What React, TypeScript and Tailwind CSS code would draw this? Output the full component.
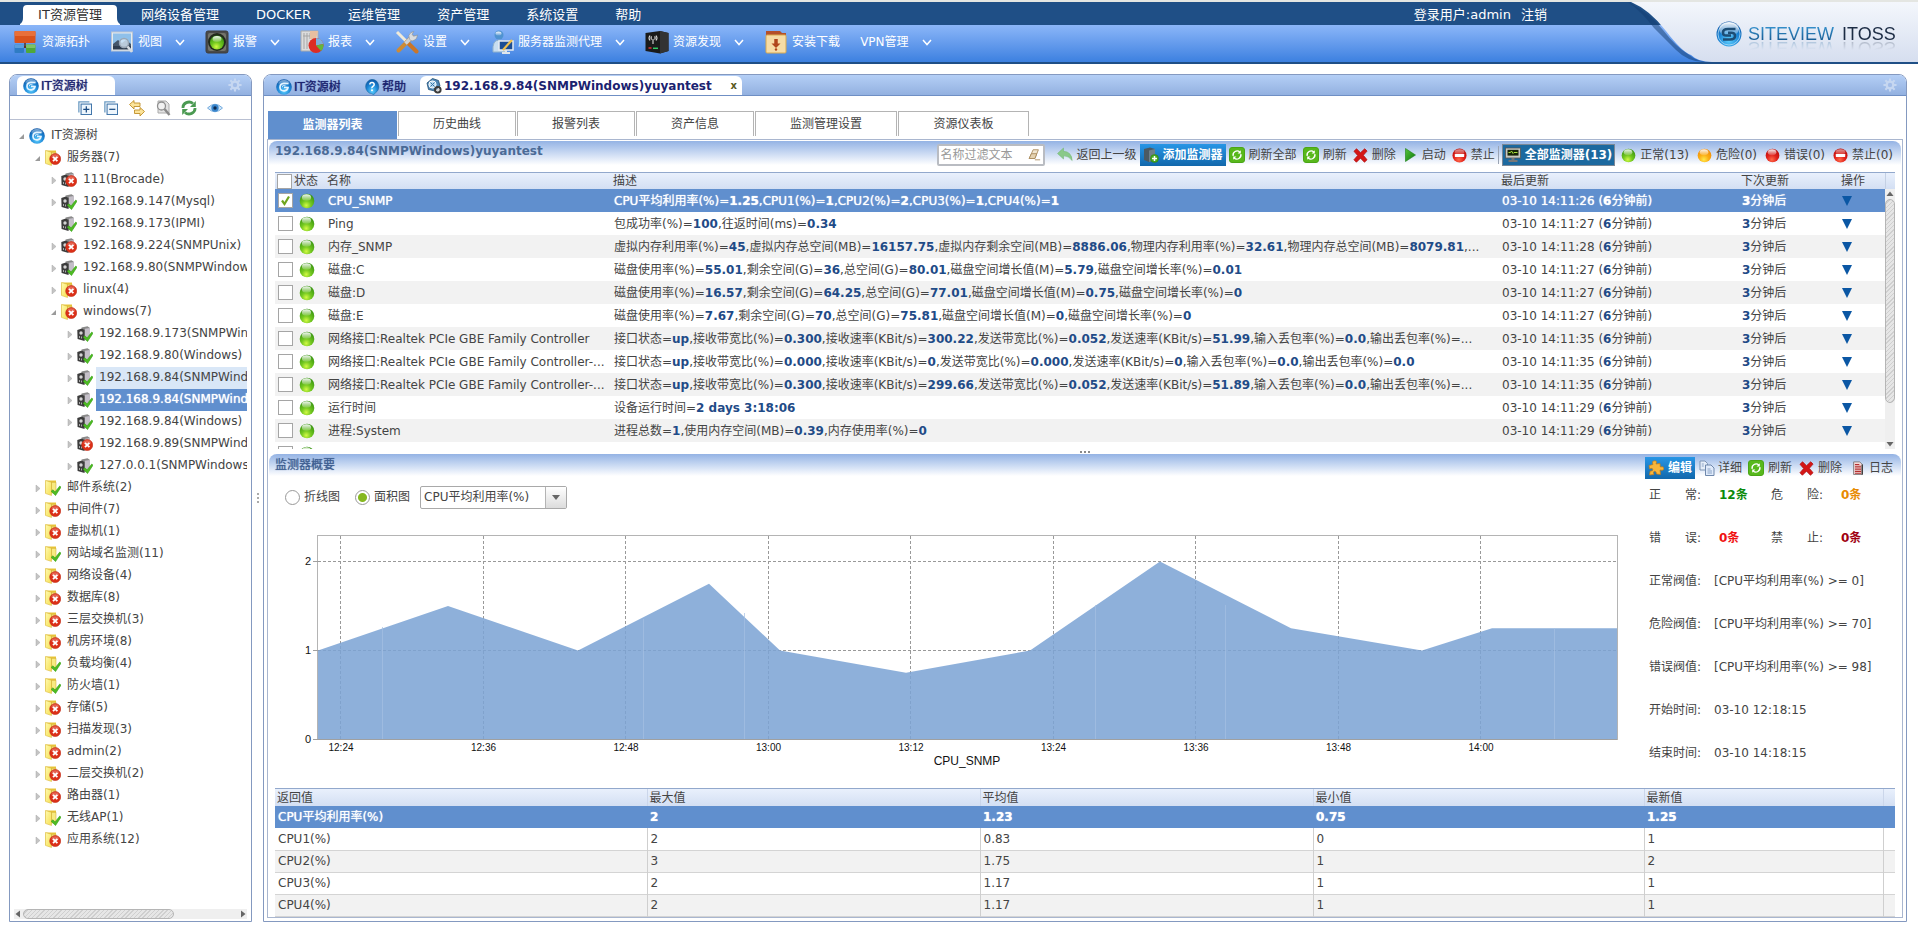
import React, { useState } from "react";

type IconProps = { size?: number };

function Defs() {
  return (
    <svg width="0" height="0" className="absolute" aria-hidden="true">
      <defs>
        <radialGradient id="gGreen" cx="45%" cy="80%" r="80%">
          <stop offset="0" stopColor="#d2fa44" />
          <stop offset="0.4" stopColor="#74c820" />
          <stop offset="1" stopColor="#33900f" />
        </radialGradient>
        <radialGradient id="gOrange" cx="45%" cy="80%" r="75%">
          <stop offset="0" stopColor="#ffe84a" />
          <stop offset="0.5" stopColor="#fbab12" />
          <stop offset="1" stopColor="#f08c08" />
        </radialGradient>
        <radialGradient id="gRed" cx="45%" cy="80%" r="75%">
          <stop offset="0" stopColor="#ff6a4a" />
          <stop offset="0.5" stopColor="#e0201a" />
          <stop offset="1" stopColor="#b80c0a" />
        </radialGradient>
        <linearGradient id="gGloss" x1="0" y1="0" x2="0" y2="1">
          <stop offset="0" stopColor="#fff" stopOpacity="0.95" />
          <stop offset="1" stopColor="#fff" stopOpacity="0.15" />
        </linearGradient>
        <radialGradient id="gBlue" cx="50%" cy="75%" r="80%">
          <stop offset="0" stopColor="#5fd0ff" />
          <stop offset="0.5" stopColor="#1c86d6" />
          <stop offset="1" stopColor="#0a4c9c" />
        </radialGradient>
        <linearGradient id="gFolder" x1="0" y1="0" x2="1" y2="1">
          <stop offset="0" stopColor="#fffbb0" />
          <stop offset="1" stopColor="#f6de50" />
        </linearGradient>
        <linearGradient id="gHeader" x1="0" y1="0" x2="0" y2="1">
          <stop offset="0" stopColor="#f4f7fc" />
          <stop offset="1" stopColor="#d6deef" />
        </linearGradient>
        <linearGradient id="gPlay" x1="0" y1="0" x2="1" y2="1">
          <stop offset="0" stopColor="#58c33c" />
          <stop offset="1" stopColor="#0b7a0b" />
        </linearGradient>
      </defs>
    </svg>
  );
}

function Svg({ size = 16, box = 16, children }: { size?: number; box?: number; children: React.ReactNode }) {
  return (
    <svg width={size} height={size} viewBox={`0 0 ${box} ${box}`} className="shrink-0" aria-hidden="true">
      {children}
    </svg>
  );
}

function SwirlIcon({ size = 16 }: IconProps) {
  return (
    <Svg size={size}>
      <circle cx="8" cy="8" r="7.8" fill="url(#gBlue)" />
      <ellipse cx="8" cy="4" rx="5.6" ry="3" fill="url(#gGloss)" opacity="0.5" />
      <path d="M12.500 4.500 8 4.300Q3.800 4.800 4 8.500T8.500 11.800Q11.500 11.500 12 8.500L8 8.300" fill="none" stroke="#e4f4ff" strokeWidth="1.700" />
      <path d="M9.500 6.300Q6.500 6 6.300 8.200" fill="none" stroke="#bfe2fa" strokeWidth="1.100" />
    </Svg>
  );
}

function LogoIcon() {
  return (
    <Svg size={26} box={26}>
      <circle cx="13" cy="13" r="12.500" fill="url(#gBlue)" />
      <circle cx="13" cy="13" r="11" fill="none" stroke="#bfe4f8" strokeWidth="1" opacity="0.7" />
      <ellipse cx="13" cy="8" rx="10" ry="7" fill="url(#gGloss)" />
      <path d="M19.500 8H12Q7 8 7 11.500T11 14.500H15" fill="none" stroke="#1d4d75" strokeWidth="2.600" />
      <path d="M7 18.500H14Q19 18.500 19 15T15 11.700H12" fill="none" stroke="#1d4d75" strokeWidth="2.600" />
    </Svg>
  );
}

function HelpIcon() {
  return (
    <Svg>
      <path d="M8 0.300a7.300 7.300 0 0 1 3.500 13.400L9.500 15.900 8 14.800A7.300 7.300 0 0 1 8 0.300Z" fill="url(#gBlue)" stroke="#1d6a9c" strokeWidth="0.500" />
      <path d="M5.800 5.500Q6 3.500 8 3.500T10.200 5.500Q10.200 6.600 8.900 7.400T8 9.300" fill="none" stroke="#fff" strokeWidth="1.500" />
      <circle cx="8" cy="11.300" r="1" fill="#fff" />
    </Svg>
  );
}

function HostIcon() {
  return (
    <Svg>
      <path d="M1 5 6.500 0.500 12.500 2.500 14 8 9 13 2.500 11.500Z" fill="#4d86b4" stroke="#1f4c74" strokeWidth="0.800" />
      <circle cx="6.500" cy="6.500" r="3.600" fill="#bcdcf2" stroke="#fff" strokeWidth="1" />
      <path d="M4.500 4.500l4 4M8.500 4.500l-4 4" stroke="#3573a6" strokeWidth="1" />
      <circle cx="11.800" cy="11.800" r="2.800" fill="none" stroke="#3c3c3c" strokeWidth="2" />
      <circle cx="11.800" cy="11.800" r="1.400" fill="#d7d7d7" />
    </Svg>
  );
}

function GearIcon() {
  return (
    <Svg size={14}>
      <g stroke="#c6d7f1" strokeWidth="2.400">
        <path d="M8 0.500v15M0.500 8h15M2.700 2.700l10.600 10.600M13.300 2.700L2.700 13.300" />
      </g>
      <circle cx="8" cy="8" r="3.800" fill="#a4bee8" stroke="#c6d7f1" strokeWidth="2.600" />
    </Svg>
  );
}

function Ball({ tone, size = 15 }: { tone: "green" | "orange" | "red"; size?: number }) {
  const fill = { green: "url(#gGreen)", orange: "url(#gOrange)", red: "url(#gRed)" }[tone];
  return (
    <Svg size={size}>
      <circle cx="8" cy="8" r="7.300" fill={fill} />
      <ellipse cx="7.500" cy="4.500" rx="4.600" ry="3.200" fill="url(#gGloss)" />
    </Svg>
  );
}

function StopIcon() {
  return (
    <Svg size={15}>
      <circle cx="8" cy="8" r="7.500" fill="url(#gRed)" />
      <ellipse cx="8" cy="4.200" rx="5.200" ry="3" fill="url(#gGloss)" opacity="0.6" />
      <rect x="3" y="6.500" width="10" height="3" rx="0.500" fill="#fff" />
    </Svg>
  );
}

function StatusBadge({ ok }: { ok: boolean }) {
  return ok ? (
    <path d="M6.200 11.200 8 9.800 10 12 14.800 6 16 7.200 10.500 15.600Z" fill="#4dbb22" stroke="#38a015" strokeWidth="0.600" />
  ) : (
    <g>
      <circle cx="10.200" cy="9" r="5.500" fill="#dc3018" stroke="#c02a14" strokeWidth="0.600" />
      <ellipse cx="10.200" cy="6.500" rx="3.600" ry="2.200" fill="#fff" opacity="0.250" />
      <path d="M8 6.800l4.400 4.400M12.400 6.800l-4.400 4.400" stroke="#fff" strokeWidth="1.800" />
    </g>
  );
}

function FolderIcon({ ok }: { ok: boolean }) {
  return (
    <Svg>
      <path d="M0.500 0.500H11V13H0.500Z" fill="#e9c63a" />
      <path d="M0.500 0.500 6.500 2.300V15.500L0.500 13.500Z" fill="url(#gFolder)" stroke="#d6b234" strokeWidth="0.500" />
      <path d="M6.500 2.300H11V13H6.500Z" fill="#f8ea80" stroke="#c9a52a" strokeWidth="0.500" />
      <StatusBadge ok={ok} />
    </Svg>
  );
}

function ServerIcon({ ok }: { ok: boolean }) {
  return (
    <Svg>
      <path d="M4.500 1.500 10.500 0.300 13 2V12L7.500 14.500Z" fill="#8a8a8a" />
      <path d="M8 2.800 13 2V12L8 14Z" fill="#c4bfc8" />
      <path d="M0.300 4 4.800 2.500 7.500 4V15L0.600 13Z" fill="#3c3c3c" />
      <circle cx="4" cy="7" r="1.700" fill="#d4d4d4" />
      <path d="M2.500 10v2M4.500 10.500v2" stroke="#c8c8c8" strokeWidth="0.800" />
      <StatusBadge ok={ok} />
    </Svg>
  );
}

function RefreshBox() {
  return (
    <Svg>
      <rect x="0.500" y="0.500" width="15" height="15" rx="2.500" fill="#58b81c" stroke="#4aa516" />
      <path d="M4.200 8.800A4 4 0 0 1 10.800 5M11.800 7.200A4 4 0 0 1 5.200 11" fill="none" stroke="#fff" strokeWidth="1.400" />
      <path d="M11.800 3.200v3.200H8.600ZM4.200 12.800V9.600h3.200Z" fill="#fff" />
    </Svg>
  );
}

function DeleteIcon() {
  return (
    <Svg size={15}>
      <path d="M1 3.500 3.800 0.800 8 5 12.500 0.800 15 3.300 11 7.800 15 12.500 12.200 15.200 8 10.800 3.600 15.200 1 12.500 5 8Z" fill="#d41616" stroke="#b01010" strokeWidth="0.800" />
    </Svg>
  );
}

function BackIcon() {
  return (
    <Svg>
      <path d="M0.500 6.500 6.500 1V4.300Q14.500 4.500 15.200 13.500 11.500 8.600 6.500 8.800V12Z" fill="#8ac98a" stroke="#6cb46c" strokeWidth="0.500" />
    </Svg>
  );
}

function AddMonitorIcon() {
  return (
    <Svg>
      <path d="M1 2 7 0.500 12 2V13L6 15 1 13Z" fill="#4b5a63" />
      <path d="M6 3.500 12 2V13L6 15Z" fill="#6d7f8a" />
      <circle cx="11.500" cy="11.500" r="4" fill="#46a81e" stroke="#2d7c0d" strokeWidth="0.500" />
      <path d="M11.500 9v5M9 11.500h5" stroke="#fff" strokeWidth="1.500" />
    </Svg>
  );
}

function PlayIcon() {
  return (
    <svg width="11" height="14" viewBox="0 0 11 14" className="shrink-0" aria-hidden="true">
      <path d="M0.500 0.500 10.500 7 0.500 13.500Z" fill="url(#gPlay)" stroke="#1a7d14" strokeWidth="0.600" />
    </svg>
  );
}

function MonitorIcon() {
  return (
    <Svg>
      <rect x="0.500" y="1" width="15" height="10" fill="#c9c9c0" stroke="#555" strokeWidth="0.800" />
      <rect x="2.500" y="2.800" width="11" height="5.800" fill="#162406" />
      <path d="M3.500 5.500h2l1-1.500 1.500 2.500 1-1h3.500" stroke="#a8e03c" strokeWidth="1" fill="none" />
      <path d="M6.500 11h3v2h3v2h-9v-2h3Z" fill="#777" />
    </Svg>
  );
}

function EraserIcon() {
  return (
    <Svg size={14}>
      <path d="M7 2h6L9 12H2.500Z" fill="#f1e6d0" stroke="#a8895a" />
      <path d="M5 6.500h6.200L9 12H2.500Z" fill="#e4d2b0" stroke="#a8895a" />
      <path d="M9 13.500h6" stroke="#a8895a" />
    </Svg>
  );
}

function PuzzleIcon() {
  return (
    <Svg>
      <path d="M1 5.500 5 4.500Q3.500 1 6.500 0.800T8 4L12 3.500 12.300 7Q15.800 5.800 15.800 8.500T12 10L12.500 14.500 8.500 14Q8.500 11 6.500 11.300T6 14.500L1.500 15 2.200 11Q5 11.500 4.800 9.500T1.600 8.800Z" fill="#f8b63c" stroke="#c97a10" strokeWidth="0.700" />
    </Svg>
  );
}

function CopyIcon() {
  return (
    <Svg>
      <path d="M1 1h5l2.500 2.500V10H1Z" fill="#e4edf8" stroke="#7d94b4" />
      <path d="M6.500 5H12l3 3v7.500H6.500Z" fill="#dfeafa" stroke="#6f88ac" />
      <path d="M8.500 9h3M8.500 11h4.500M8.500 13h4.500M2.800 4h2M2.800 6h2" stroke="#8aa3c6" />
    </Svg>
  );
}

function LogIcon() {
  return (
    <Svg size={14}>
      <path d="M3 1h7l3 3v11.500H3Z" fill="#f5dada" stroke="#777" />
      <path d="M4.500 4h5M4.500 6h7M4.500 8h7M4.500 10h7M4.500 12h7M4.500 14h7" stroke="#b02828" strokeWidth="1.100" />
      <path d="M12.800 4v11.500" stroke="#333" strokeWidth="1.500" />
    </Svg>
  );
}

function TopologyIcon() {
  return (
    <Svg size={24} box={24}>
      <rect x="0.500" y="1" width="21" height="12" rx="1" fill="#d9531c" />
      <rect x="0.500" y="1" width="21" height="5" rx="1" fill="#e8703a" />
      <path d="M11 13v5M5 17h12" stroke="#5a3020" strokeWidth="1.500" />
      <rect x="0.500" y="14.500" width="9.500" height="8.500" rx="1" fill="#2f7cc4" />
      <rect x="0.500" y="14.500" width="9.500" height="3.500" rx="1" fill="#5a9edb" />
      <rect x="12" y="14.500" width="9.500" height="8.500" rx="1" fill="#4fa83a" />
      <rect x="12" y="14.500" width="9.500" height="3.500" rx="1" fill="#7cc268" />
    </Svg>
  );
}

function ViewIcon() {
  return (
    <Svg size={24} box={24}>
      <rect x="1.500" y="2" width="21" height="19" fill="#e6ebf0" stroke="#b9c5d2" />
      <rect x="3" y="3.500" width="18" height="12" fill="#8fc0ea" />
      <path d="M3 18V14l5-4 4 3 4-3 5 4v4Z" fill="#45566a" />
      <path d="M3 16h18v3.500H3Z" fill="#2e3d50" />
      <circle cx="14" cy="13" r="4.500" fill="#d7e9f7" fillOpacity="0.800" stroke="#9aa7b6" strokeWidth="1.400" />
      <path d="M17.500 16.500 22 22" stroke="#d5dbe2" strokeWidth="2.600" />
    </Svg>
  );
}

function AlarmIcon() {
  return (
    <Svg size={24} box={24}>
      <rect x="1" y="1" width="22" height="22" rx="2" fill="#4a4a4a" stroke="#3c3c3c" />
      <rect x="3" y="3" width="18" height="18" rx="2" fill="#74746c" />
      <circle cx="12" cy="12" r="9" fill="#222a1c" />
      <circle cx="12" cy="12.500" r="7" fill="url(#gGreen)" />
      <ellipse cx="12" cy="9" rx="4.500" ry="3" fill="url(#gGloss)" />
    </Svg>
  );
}

function ReportIcon() {
  return (
    <Svg size={24} box={24}>
      <path d="M1 1h17v20H1Z" fill="#dcdcdc" stroke="#aaa" />
      <path d="M4 3v16M7 3v16M10 3v6M3 6h12" stroke="#a5a5a5" />
      <path d="M10 1h8l-2 8h-6Z" fill="#e8bfa0" />
      <circle cx="16" cy="15.500" r="7.500" fill="#dc2d25" />
      <path d="M16 15.500V8a7.500 7.500 0 0 1 7.300 6Z" fill="#7daedd" />
      <path d="M16 15.500 23.300 14a7.500 7.500 0 0 1-2.300 7Z" fill="#63b63c" />
    </Svg>
  );
}

function ToolsIcon() {
  return (
    <Svg size={24} box={24}>
      <path d="M2 2 12 12" stroke="#f0ead8" strokeWidth="3" />
      <path d="M12 12 21.500 21.500" stroke="#c9762a" strokeWidth="4" strokeLinecap="round" />
      <path d="M17 7 3.500 20.500" stroke="#ce8b35" strokeWidth="4" strokeLinecap="round" />
      <path d="M10.500 13.500 17 7" stroke="#cfd2d6" strokeWidth="3.500" />
      <path d="M16 2.500Q12.500 5 14.500 9T21.500 8.500L22.500 5 18.800 6.200 17 4.500 18.800 1.500Z" fill="#d9dcdf" stroke="#8d8d8d" strokeWidth="0.600" />
    </Svg>
  );
}

function AgentIcon() {
  return (
    <Svg size={24} box={24}>
      <circle cx="9" cy="5" r="4.500" fill="#4f93d0" />
      <ellipse cx="8.500" cy="3.500" rx="3" ry="2" fill="url(#gGloss)" />
      <path d="M3 22Q2 10 9 10T16 22Z" fill="#c8ddf0" stroke="#8fb0cc" />
      <rect x="9" y="11" width="14" height="9" fill="#1c4e93" stroke="#e6ecf2" strokeWidth="1.500" />
      <path d="M12 23h8M16 20v3" stroke="#dfe6ec" strokeWidth="2" />
      <path d="M13 20 22 10" stroke="#f1c04b" strokeWidth="2.200" />
    </Svg>
  );
}

function DiscoverIcon() {
  return (
    <Svg size={24} box={24}>
      <path d="M0.500 3 15 1 23.500 3V21L15 23.500 0.500 21Z" fill="#1a1a1a" />
      <path d="M15 1 23.500 3V21L15 23.500Z" fill="#333" />
      <g fill="none" stroke="#d7d7d7" strokeWidth="1.100">
        <path d="M5 10.500a4 4 0 0 1 0-5M11 5.500a4 4 0 0 1 0 5M6.700 9.500a2 2 0 0 1 0-3M9.500 6.500a2 2 0 0 1 0 3M8 9v5" />
      </g>
      <path d="M3.500 18h3" stroke="#d33" strokeWidth="1.500" />
      <path d="M8 18.300h5" stroke="#3c6" strokeWidth="1.500" />
    </Svg>
  );
}

function DownloadIcon() {
  return (
    <Svg size={24} box={24}>
      <path d="M2 1h14l2 2h4v4H2Z" fill="#b4502a" />
      <rect x="2" y="5" width="20" height="18" rx="1" fill="#f6dca6" stroke="#d9a94f" />
      <path d="M12 9v5" stroke="#b0461c" strokeWidth="3.500" />
      <path d="M7.500 13.500h9L12 18Z" fill="#b0461c" />
      <circle cx="12" cy="19.500" r="1.200" fill="#b0461c" />
    </Svg>
  );
}

function Chevron() {
  return (
    <svg width="10" height="7" viewBox="0 0 10 7" className="ml-[13px] shrink-0" aria-hidden="true">
      <path d="M1 1 5 5.500 9 1" fill="none" stroke="#fff" strokeWidth="1.500" />
    </svg>
  );
}

const NAV = ["网络设备管理", "DOCKER", "运维管理", "资产管理", "系统设置", "帮助"];

const TOOLS: { label: string; icon?: React.ReactNode; menu?: boolean }[] = [
  { label: "资源拓扑", icon: <TopologyIcon /> },
  { label: "视图", icon: <ViewIcon />, menu: true },
  { label: "报警", icon: <AlarmIcon />, menu: true },
  { label: "报表", icon: <ReportIcon />, menu: true },
  { label: "设置", icon: <ToolsIcon />, menu: true },
  { label: "服务器监测代理", icon: <AgentIcon />, menu: true },
  { label: "资源发现", icon: <DiscoverIcon />, menu: true },
  { label: "安装下载", icon: <DownloadIcon /> },
  { label: "VPN管理", menu: true },
];

function Header() {
  return (
    <header className="relative border-t-2 border-[#e4e6e2] text-white">
      <nav className="flex h-[23px] items-end bg-[#1f4f86] text-[13px] leading-5">
        <a href="#it" className="relative ml-5 flex h-5 w-[100px] items-center justify-center text-[#333]">
          <svg className="absolute inset-0 h-full w-full" viewBox="0 0 100 20" preserveAspectRatio="none" aria-hidden="true">
            <path d="M0 19Q3 17 3 13V4Q3 0 7 0H93Q97 0 97 4V13Q97 17 100 19V20H0Z" fill="#fff" />
          </svg>
          <span className="relative">IT资源管理</span>
        </a>
        <div className="ml-[21px] flex flex-1 gap-[37px]">
          {NAV.map((n) => (
            <a key={n} href="#nav">{n}</a>
          ))}
        </div>
        <div className="mr-[371px] flex gap-[10px]">
          <span>登录用户:admin</span>
          <a href="#logout">注销</a>
        </div>
      </nav>
      <div className="flex h-[39px] items-center gap-5 border-b-2 border-[#1f4f86] bg-linear-to-b from-[#8bb6f8] to-[#3c80e0] pl-[14px] text-[12px]">
        {TOOLS.map((t) => (
          <button key={t.label} type="button" className="flex items-center pb-[3px]">
            {t.icon && <span className="mr-1">{t.icon}</span>}
            {t.label}
            {t.menu && <Chevron />}
          </button>
        ))}
      </div>
      <div className="absolute top-0 right-0 h-[60px] w-[290px]">
        <svg className="absolute inset-0" width="290" height="60" viewBox="0 0 290 60" aria-hidden="true">
          <path d="M0 0Q22 11 35 28T60 52Q69 60 82 60H76Q60 60 48 48T26 26Q14 10 0 0Z" fill="#123c70" opacity="0.500" />
          <path d="M3 0Q22 8 38 29T63 53Q70 60 84 60H290V0Z" fill="url(#gHeader)" />
        </svg>
        <div className="relative flex items-center gap-[6px] pt-[19px] pl-[88px]">
          <LogoIcon />
          <span className="flex gap-2 font-['Liberation_Sans',sans-serif] text-[18px] leading-5 [-webkit-box-reflect:below_-6px_linear-gradient(transparent_40%,rgba(0,0,0,0.35))]">
            <span className="bg-linear-to-b from-[#3b9ad6] to-[#104f86] bg-clip-text text-transparent">SITEVIEW</span>
            <span className="text-[#1c2c44]">ITOSS</span>
          </span>
        </div>
      </div>
    </header>
  );
}

type Node = { label: string; level: number; kind: "root" | "folder" | "server"; ok?: boolean; arrow: "open" | "closed" | "none"; state?: "hover" | "selected" };

const f = (label: string, ok: boolean): Node => ({ label, level: 1, kind: "folder", ok, arrow: "closed" });
const s = (label: string, level: number, ok: boolean, extra: Partial<Node> = {}): Node => ({ label, level, kind: "server", ok, arrow: "closed", ...extra });

const TREE: Node[] = [
  { label: "IT资源树", level: 0, kind: "root", arrow: "open" },
  { label: "服务器(7)", level: 1, kind: "folder", ok: false, arrow: "open" },
  s("111(Brocade)", 2, false),
  s("192.168.9.147(Mysql)", 2, true),
  s("192.168.9.173(IPMI)", 2, true, { arrow: "none" }),
  s("192.168.9.224(SNMPUnix)", 2, false),
  s("192.168.9.80(SNMPWindows)", 2, true),
  { label: "linux(4)", level: 2, kind: "folder", ok: false, arrow: "closed" },
  { label: "windows(7)", level: 2, kind: "folder", ok: false, arrow: "open" },
  s("192.168.9.173(SNMPWindows)", 3, true),
  s("192.168.9.80(Windows)", 3, true),
  s("192.168.9.84(SNMPWindows)", 3, true, { state: "hover" }),
  s("192.168.9.84(SNMPWindows)", 3, true, { state: "selected" }),
  s("192.168.9.84(Windows)", 3, true),
  s("192.168.9.89(SNMPWindows)", 3, false),
  s("127.0.0.1(SNMPWindows)", 3, true),
  f("邮件系统(2)", true),
  f("中间件(7)", false),
  f("虚拟机(1)", false),
  f("网站域名监测(11)", true),
  f("网络设备(4)", false),
  f("数据库(8)", false),
  f("三层交换机(3)", false),
  f("机房环境(8)", false),
  f("负载均衡(4)", true),
  f("防火墙(1)", true),
  f("存储(5)", false),
  f("扫描发现(3)", false),
  f("admin(2)", false),
  f("二层交换机(2)", false),
  f("路由器(1)", false),
  f("无线AP(1)", true),
  f("应用系统(12)", false),
];

const INDENT = ["pl-[9px]", "pl-[25px]", "pl-[41px]", "pl-[57px]"];
const GLOW = "[text-shadow:0_0_1px_currentColor]";

function TreeRow({ node }: { node: Node }) {
  const tone =
    node.state === "selected" ? `bg-[#608fce] text-white ${GLOW}` : node.state === "hover" ? "bg-[#d9e7f7] text-[#444]" : "text-[#444]";
  return (
    <li className={`flex h-[22px] items-center ${INDENT[node.level]}`}>
      <svg width="10" height="8" viewBox="0 0 10 8" className="shrink-0" aria-hidden="true">
        {node.arrow === "open" && <path d="M0 7H5V2Z" fill="#9a9a9a" />}
        {node.arrow === "closed" && <path d="M1 1V8L5 4.500Z" fill="#c4c4c4" stroke="#a8a8a8" strokeWidth="0.500" />}
      </svg>
      {node.kind === "root" ? <SwirlIcon /> : node.kind === "folder" ? <FolderIcon ok={!!node.ok} /> : <ServerIcon ok={!!node.ok} />}
      <a href="#node" className={`ml-[3px] h-[22px] flex-1 overflow-hidden pl-[3px] leading-5 whitespace-nowrap ${tone}`}>
        {node.label}
      </a>
    </li>
  );
}

function TreeTools() {
  return (
    <div className="flex h-6 items-center justify-end gap-[10px] border-b border-[#b9c0d2] pt-px pr-[28px]">
      {[
        { n: "展开", i: <Svg size={14}><path d="M1 13V1h12" fill="none" stroke="#6d9cc4" strokeWidth="1.500" /><rect x="3.500" y="3.500" width="12" height="12" fill="#eef6fd" stroke="#3d73a8" strokeWidth="1.200" /><path d="M9.500 6v7M6 9.500h7" stroke="#1a4a82" strokeWidth="1.400" /></Svg> },
        { n: "折叠", i: <Svg size={14}><path d="M1 13V1h12" fill="none" stroke="#6d9cc4" strokeWidth="1.500" /><rect x="3.500" y="3.500" width="12" height="12" fill="#eef6fd" stroke="#3d73a8" strokeWidth="1.200" /><path d="M6 9.500h7" stroke="#1a4a82" strokeWidth="1.400" /></Svg> },
        { n: "切换", i: <Svg><path d="M0.500 4.500 5 0.500V3h6v3.500H5V9Z" fill="#fbe39a" stroke="#c08f28" strokeWidth="0.900" /><path d="M15.500 11.500 11 7.500V10H5.500v3.500H11V16Z" fill="#fbe39a" stroke="#c08f28" strokeWidth="0.900" /></Svg> },
        { n: "搜索", i: <Svg><path d="M3 1h8l3 3v9H3Z" fill="#e3e3e3" stroke="#aaa" /><circle cx="6.500" cy="6" r="4" fill="#f2f2f2" stroke="#8f8f8f" strokeWidth="1.300" /><path d="M9.500 9 14.500 15" stroke="#8a8a8a" strokeWidth="2.400" /></Svg> },
        { n: "刷新", i: <Svg><path d="M2 8A6 5.500 0 0 1 12 3.500M14 8A6 5.500 0 0 1 4 12.500" fill="none" stroke="#4b9a52" strokeWidth="2.800" /><path d="M14.800 1v6H9ZM1.200 15V9H7Z" fill="#4b9a52" /></Svg> },
        { n: "查看", i: <Svg><path d="M0.500 8Q8 0.500 15.500 8 8 15.500 0.500 8Z" fill="#cde4f8" stroke="#79aede" /><circle cx="8" cy="8" r="3.700" fill="#3a86cc" /><circle cx="8" cy="8" r="1.700" fill="#0c2a50" /></Svg> },
      ].map((t) => (
        <button key={t.n} type="button" aria-label={t.n} className="flex w-4 justify-center">
          {t.i}
        </button>
      ))}
    </div>
  );
}

const PANEL = "flex flex-col border border-[#8499c0] rounded-t-[8px]";
const PANEL_HEAD = "flex h-[21px] shrink-0 items-end rounded-t-[7px] border-b border-[#6f8fc4] bg-linear-to-b from-[#b4cff6] to-[#93b1e0] text-[#1b2370]";

function Sidebar() {
  return (
    <aside className={`${PANEL} w-[243px] shrink-0`}>
      <div className={PANEL_HEAD}>
        <div className="ml-[7px] flex h-[19px] w-[98px] items-center gap-[2px] rounded-t-[6px] bg-white pl-[6px]">
          <SwirlIcon />
          <span className={GLOW}>IT资源树</span>
        </div>
        <button type="button" aria-label="面板设置" className="mr-[9px] mb-[3px] ml-auto">
          <GearIcon />
        </button>
      </div>
      <TreeTools />
      <ul className="flex-1 overflow-hidden pt-[5px] pr-1">
        {TREE.map((n, i) => (
          <TreeRow key={i} node={n} />
        ))}
      </ul>
      <div className="mx-1 mb-[2px] flex h-[10px] items-center bg-[#efefef]">
        <svg width="9" height="8" viewBox="0 0 9 8" aria-hidden="true"><path d="M6 0.500v7L1.500 4Z" fill="#666" /></svg>
        <div className="h-[10px] w-[151px] rounded-full border border-[#b5b5b5] bg-[repeating-linear-gradient(135deg,#e6e6e6_0px,#e6e6e6_2px,#cfcfcf_2px,#cfcfcf_3px)]" />
        <svg width="9" height="8" viewBox="0 0 9 8" className="ml-auto" aria-hidden="true"><path d="M3 0.500v7L7.500 4Z" fill="#666" /></svg>
      </div>
    </aside>
  );
}

const SUBTABS = [
  { t: "历史曲线", w: "w-[118px]" },
  { t: "报警列表", w: "w-[118px]" },
  { t: "资产信息", w: "w-[118px]" },
  { t: "监测管理设置", w: "w-[142px]" },
  { t: "资源仪表板", w: "w-[131px]" },
];

const MONITORS: { name: string; desc: string; time: string; more?: boolean }[] = [
  { name: "CPU_SNMP", desc: "CPU平均利用率(%)=1.25,CPU1(%)=1,CPU2(%)=2,CPU3(%)=1,CPU4(%)=1", time: "26" },
  { name: "Ping", desc: "包成功率(%)=100,往返时间(ms)=0.34", time: "27" },
  { name: "内存_SNMP", desc: "虚拟内存利用率(%)=45,虚拟内存总空间(MB)=16157.75,虚拟内存剩余空间(MB)=8886.06,物理内存利用率(%)=32.61,物理内存总空间(MB)=8079.81", time: "28", more: true },
  { name: "磁盘:C", desc: "磁盘使用率(%)=55.01,剩余空间(G)=36,总空间(G)=80.01,磁盘空间增长值(M)=5.79,磁盘空间增长率(%)=0.01", time: "27" },
  { name: "磁盘:D", desc: "磁盘使用率(%)=16.57,剩余空间(G)=64.25,总空间(G)=77.01,磁盘空间增长值(M)=0.75,磁盘空间增长率(%)=0", time: "27" },
  { name: "磁盘:E", desc: "磁盘使用率(%)=7.67,剩余空间(G)=70,总空间(G)=75.81,磁盘空间增长值(M)=0,磁盘空间增长率(%)=0", time: "27" },
  { name: "网络接口:Realtek PCIe GBE Family Controller", desc: "接口状态=up,接收带宽比(%)=0.300,接收速率(KBit/s)=300.22,发送带宽比(%)=0.052,发送速率(KBit/s)=51.99,输入丢包率(%)=0.0,输出丢包率(%)=...", time: "35" },
  { name: "网络接口:Realtek PCIe GBE Family Controller-...", desc: "接口状态=up,接收带宽比(%)=0.000,接收速率(KBit/s)=0,发送带宽比(%)=0.000,发送速率(KBit/s)=0,输入丢包率(%)=0.0,输出丢包率(%)=0.0", time: "35" },
  { name: "网络接口:Realtek PCIe GBE Family Controller-...", desc: "接口状态=up,接收带宽比(%)=0.300,接收速率(KBit/s)=299.66,发送带宽比(%)=0.052,发送速率(KBit/s)=51.89,输入丢包率(%)=0.0,输出丢包率(%)=...", time: "35" },
  { name: "运行时间", desc: "设备运行时间=2 days 3:18:06", time: "29" },
  { name: "进程:System", desc: "进程总数=1,使用内存空间(MB)=0.39,内存使用率(%)=0", time: "29" },
  { name: "", desc: "", time: "" },
];

function Desc({ text, tone, more }: { text: string; tone: string; more?: boolean }) {
  if (!text) return null;
  return (
    <>
      {text.split(",").map((pair, i) => {
        const [k, v] = pair.split("=");
        return (
          <React.Fragment key={i}>
            {i > 0 && ","}
            {k}={v === "..." ? v : <b className={tone}>{v}</b>}
          </React.Fragment>
        );
      })}
      {more && ",..."}
    </>
  );
}

function Check({ label, checked, onChange }: { label: string; checked: boolean; onChange: () => void }) {
  return (
    <span className="relative block h-[15px] w-[15px]">
      <input
        type="checkbox"
        aria-label={label}
        checked={checked}
        onChange={onChange}
        className="block h-[15px] w-[15px] appearance-none border border-[#a5a5a5] bg-white"
      />
      {checked && (
        <svg className="pointer-events-none absolute inset-0" width="15" height="15" viewBox="0 0 15 15" aria-hidden="true">
          <path d="M4 7.500 6.500 11 11 3.500" fill="none" stroke="#6fa51e" strokeWidth="2.200" />
        </svg>
      )}
    </span>
  );
}

const TH = "h-4 p-0 pl-[3px] text-left font-normal leading-4";
const HEAD_ROW = "bg-linear-to-b from-[#e9f0fc] to-[#d3dff3] text-[#444]";

function MonitorTable() {
  const [checked, setChecked] = useState<boolean[]>(MONITORS.map((_, i) => i === 0));
  const toggle = (i: number) => setChecked(checked.map((c, j) => (j === i ? !c : c)));
  return (
    <div className="mx-[7px] flex h-[277px] overflow-hidden border-t border-[#92a8cc]">
      <div className="min-w-0 flex-1">
        <table className="w-full table-fixed border-collapse text-[#444]">
          <colgroup>
            <col className="w-[19px]" />
            <col className="w-[30px]" />
            <col className="w-[286px]" />
            <col />
            <col className="w-[240px]" />
            <col className="w-[100px]" />
            <col className="w-[47px]" />
          </colgroup>
          <thead>
            <tr className={HEAD_ROW}>
              <th className="h-4 p-0 pl-[2px]">
                <Check label="全选" checked={false} onChange={() => setChecked(checked.map(() => true))} />
              </th>
              <th className="h-4 p-0 text-left leading-4 font-normal whitespace-nowrap">状态</th>
              <th className={TH}>名称</th>
              <th className={TH}>描述</th>
              <th className={TH}>最后更新</th>
              <th className={TH}>下次更新</th>
              <th className={TH}>操作</th>
            </tr>
          </thead>
          <tbody>
            {MONITORS.map((m, i) => {
              const sel = i === 0;
              const tone = sel ? "text-white" : "text-[#1f4b87]";
              return (
                <tr key={i} className={sel ? `bg-[#608fce] text-white ${GLOW}` : i % 2 ? "bg-white" : "bg-[#f2f2f2]"}>
                  <td className="h-[23px] p-0 pl-[3px]">
                    <Check label={m.name || "监测器"} checked={checked[i]} onChange={() => toggle(i)} />
                  </td>
                  <td className="p-0 pl-[5px]"><Ball tone="green" size={16} /></td>
                  <td className="truncate p-0 pl-1 leading-[22px]">{m.name}</td>
                  <td className="truncate p-0 pl-1 leading-[22px]"><Desc text={m.desc} tone={tone} more={m.more} /></td>
                  <td className="p-0 pl-1 leading-[22px]">
                    {m.time && <>03-10 14:11:{m.time} (<b className={tone}>6</b>分钟前)</>}
                  </td>
                  <td className="p-0 pl-1 leading-[22px]">{m.time && <><b className={tone}>3</b>分钟后</>}</td>
                  <td className="p-0 pl-1">
                    <button type="button" aria-label="操作" className="block">
                      <svg width="10" height="10" viewBox="0 0 10 10" aria-hidden="true"><path d="M0 0H10L5 10Z" fill="#0b57a4" /></svg>
                    </button>
                  </td>
                </tr>
              );
            })}
          </tbody>
        </table>
      </div>
      <div className="flex w-[10px] flex-col items-center bg-[#efefef]">
        <div className="h-4 w-full shrink-0 border-l border-[#c4d0e4] bg-linear-to-b from-[#e9f0fc] to-[#d3dff3]" />
        <svg width="8" height="10" viewBox="0 0 8 10" className="shrink-0" aria-hidden="true"><path d="M0.500 7h7L4 2.500Z" fill="#666" /></svg>
        <div className="h-[204px] w-[10px] rounded-full border border-[#b5b5b5] bg-[repeating-linear-gradient(135deg,#e6e6e6_0px,#e6e6e6_2px,#cfcfcf_2px,#cfcfcf_3px)]" />
        <svg width="8" height="10" viewBox="0 0 8 10" className="mt-auto" aria-hidden="true"><path d="M0.500 3h7L4 7.500Z" fill="#666" /></svg>
      </div>
    </div>
  );
}

const SECTION_HEAD = "mx-px flex items-start rounded-t-[8px] bg-linear-to-b from-[#94b3e4] to-white pl-[6px]";
const BTN = "flex h-[22px] items-center gap-1 text-[#444]";
const BTN_ON = "flex h-[22px] items-center gap-1 bg-linear-to-b from-[#2796e6] to-[#1268ac] px-[3px] font-bold text-white";

function Toolbar() {
  return (
    <div className="mt-[3px] mr-2 ml-auto flex items-center">
      <label className="mr-3 flex h-[22px] w-[108px] items-center rounded-[2px] border-2 border-[#b9bcc2] bg-white px-[2px]">
        <input aria-label="名称过滤文本" placeholder="名称过滤文本" className="w-0 flex-1 text-[12px] outline-none placeholder:text-[#999]" />
        <EraserIcon />
      </label>
      <button type="button" className={`${BTN} mr-[3px]`}><BackIcon />返回上一级</button>
      <button type="button" className={`${BTN_ON} mr-[3px]`}><AddMonitorIcon />添加监测器</button>
      <button type="button" className={`${BTN} mr-[6px]`}><RefreshBox />刷新全部</button>
      <button type="button" className={`${BTN} mr-[6px]`}><RefreshBox />刷新</button>
      <button type="button" className={`${BTN} mr-[9px]`}><DeleteIcon />删除</button>
      <button type="button" className={`${BTN} mr-[6px] gap-[6px]`}><PlayIcon />启动</button>
      <button type="button" className={BTN}><StopIcon />禁止</button>
      <span className="mx-[3px] h-[18px] w-px bg-[#9aa4b4]" />
      <button type="button" className="mr-[6px] flex h-[22px] items-center gap-1 border border-[#7b8896] bg-[#1c699f] px-[2px] font-bold whitespace-nowrap text-white"><MonitorIcon />全部监测器(13)</button>
      <button type="button" className={`${BTN} mr-2`}><Ball tone="green" />正常(13)</button>
      <button type="button" className={`${BTN} mr-2`}><Ball tone="orange" />危险(0)</button>
      <button type="button" className={`${BTN} mr-2`}><Ball tone="red" />错误(0)</button>
      <button type="button" className={BTN}><StopIcon />禁止(0)</button>
    </div>
  );
}

const TICKS = ["12:24", "12:36", "12:48", "13:00", "13:12", "13:24", "13:36", "13:48", "14:00"];
const POINTS: [number, number][] = [
  [49, 1], [179, 1.5], [309, 1], [440, 1.75], [511, 1], [637, 0.75], [761, 1], [891, 2], [1022, 1.25], [1153, 1], [1223, 1.25], [1348, 1.25],
];

function Chart() {
  const y = (v: number) => 224.5 - v * 89;
  const line = POINTS.map(([px, v]) => `${px},${y(v)}`).join(" ");
  return (
    <svg viewBox="0 0 1376 273" className="block h-auto w-full font-['Liberation_Sans',sans-serif]" role="img" aria-label="CPU_SNMP">
      <rect x="48.500" y="20.500" width="1300" height="204" fill="#fff" stroke="#b4b4b4" />
      <g stroke="#999" strokeDasharray="3 2">
        {TICKS.map((t, i) => <path key={t} d={`M${Math.round(71 + i * 142.5) + 0.5} 21V224`} />)}
        <path d="M49 46.500H1348M49 135.500H1348" />
      </g>
      <polygon points={`49,224.500 ${line} 1348,224.500`} fill="#7ba3d4" fillOpacity="0.860" />
      <g stroke="#a5c0e2">
        <path d="M113.500 112V224M374.500 104V224M475.500 98V224M826.500 90V224M956.500 90V224M1285.500 113V224" strokeOpacity="0.700" />
      </g>
      <path d="M44 46.500h5M44 135.500h5M44 224.500H1348" stroke="#a0a0a0" />
      <g fontSize="11" fill="#111" textAnchor="end">
        <text x="42" y="50">2</text>
        <text x="42" y="139">1</text>
        <text x="42" y="228">0</text>
      </g>
      <g fontSize="10" fill="#111" textAnchor="middle">
        {TICKS.map((t, i) => <text key={t} x={72 + i * 142.5} y="236">{t}</text>)}
      </g>
      <text x="698" y="250" fontSize="12" fill="#111" textAnchor="middle">CPU_SNMP</text>
    </svg>
  );
}

const RADIO = "h-[15px] w-[15px] appearance-none rounded-full border border-[#999] bg-white checked:bg-[radial-gradient(circle,#86b820_0px,#86b820_4px,white_5px)]";

function Controls() {
  const [mode, setMode] = useState("area");
  return (
    <div className="flex h-9 items-center pl-4 text-[#444]">
      <label className="mr-[15px] flex items-center gap-1">
        <input type="radio" name="mode" className={RADIO} checked={mode === "line"} onChange={() => setMode("line")} />
        折线图
      </label>
      <label className="mr-[10px] flex items-center gap-1">
        <input type="radio" name="mode" className={RADIO} checked={mode === "area"} onChange={() => setMode("area")} />
        面积图
      </label>
      <div className="relative">
        <select aria-label="指标" className="block h-[23px] w-[147px] appearance-none rounded-[2px] border border-[#a9a9a9] bg-white pr-6 pl-[3px] text-[12px]">
          <option>CPU平均利用率(%)</option>
          <option>CPU1(%)</option>
        </select>
        <span className="pointer-events-none absolute inset-y-px right-px flex w-[21px] items-center justify-center border-l border-[#b4b4b4] bg-linear-to-b from-white to-[#dcdcdc]">
          <svg width="8" height="5" viewBox="0 0 8 5" aria-hidden="true"><path d="M0 0H8L4 5Z" fill="#666" /></svg>
        </span>
      </div>
    </div>
  );
}

function CountPair({ a, b, v, tone, c, d, w, tone2 }: { a: string; b: string; v: string; tone: string; c: string; d: string; w: string; tone2: string }) {
  return (
    <div className="flex h-[15px] items-center">
      <span className="w-9">{a}</span>
      <span className="w-[34px]">{b}:</span>
      <b className={`w-[52px] ${tone}`}>{v}</b>
      <span className="w-9">{c}</span>
      <span className="w-[34px]">{d}:</span>
      <b className={tone2}>{w}</b>
    </div>
  );
}

const INFO = [
  ["正常阀值:", "[CPU平均利用率(%) >= 0]"],
  ["危险阀值:", "[CPU平均利用率(%) >= 70]"],
  ["错误阀值:", "[CPU平均利用率(%) >= 98]"],
  ["开始时间:", "03-10 12:18:15"],
  ["结束时间:", "03-10 14:18:15"],
];

function Info() {
  return (
    <div className="flex w-[256px] shrink-0 flex-col gap-7 pt-2 pl-1 whitespace-nowrap text-[#444]">
      <CountPair a="正" b="常" v="12条" tone="text-[#0a8a0a]" c="危" d="险" w="0条" tone2="text-[#e88a00]" />
      <CountPair a="错" b="误" v="0条" tone="text-[#f01010]" c="禁" d="止" w="0条" tone2="text-[#a00010]" />
      {INFO.map(([k, v]) => (
        <div key={k} className="flex h-[15px] items-center">
          <span className="w-[65px]">{k}</span>
          <span>{v}</span>
        </div>
      ))}
    </div>
  );
}

const VALUES = [
  ["CPU平均利用率(%)", "2", "1.23", "0.75", "1.25"],
  ["CPU1(%)", "2", "0.83", "0", "1"],
  ["CPU2(%)", "3", "1.75", "1", "2"],
  ["CPU3(%)", "2", "1.17", "1", "1"],
  ["CPU4(%)", "2", "1.17", "1", "1"],
];

function ValueTable() {
  return (
    <div className="mx-[7px] border-t border-[#92a8cc]">
      <table className="w-full table-fixed border-collapse text-[#444]">
        <colgroup>
          <col className="w-[372px]" />
          <col className="w-[333px]" />
          <col className="w-[333px]" />
          <col className="w-[331px]" />
          <col />
          <col className="w-3" />
        </colgroup>
        <thead>
          <tr className={HEAD_ROW}>
            {["返回值", "最大值", "平均值", "最小值", "最新值"].map((h) => (
              <th key={h} className="h-[17px] border-r border-[#cbd6ea] p-0 pl-[2px] text-left leading-4 font-normal">{h}</th>
            ))}
            <th className="p-0" />
          </tr>
        </thead>
        <tbody>
          {VALUES.map((r, i) =>
            i === 0 ? (
              <tr key={i} className={`bg-[#608fce] text-white ${GLOW}`}>
                {r.map((c, j) => <td key={j} className={`h-[22px] p-0 pl-[3px] leading-5 ${j > 0 ? "font-bold" : ""}`}>{c}</td>)}
                <td className="p-0" />
              </tr>
            ) : (
              <tr key={i} className={`border-b border-[#d4d4d4] ${i % 2 ? "bg-white" : "bg-[#f2f2f2]"}`}>
                {r.map((c, j) => <td key={j} className="h-[22px] border-r border-[#cfcfcf] p-0 pl-[3px] leading-5">{c}</td>)}
                <td className="p-0" />
              </tr>
            ),
          )}
        </tbody>
      </table>
    </div>
  );
}

function MainPanel() {
  return (
    <main className={`${PANEL} min-w-0 flex-1`}>
      <div className={PANEL_HEAD}>
        <a href="#tree" className={`ml-3 flex w-[88px] items-center gap-[2px] ${GLOW}`}><SwirlIcon />IT资源树</a>
        <a href="#help" className={`flex w-[56px] items-center gap-[2px] ${GLOW}`}><HelpIcon />帮助</a>
        <div className="flex h-[19px] w-[322px] items-center gap-[2px] rounded-t-[6px] bg-white pl-[6px] font-bold">
          <HostIcon />
          <span className="whitespace-nowrap">192.168.9.84(SNMPWindows)yuyantest</span>
          <button type="button" aria-label="关闭" className="ml-auto pr-[5px] text-[10px] leading-3 font-bold text-[#5a5a1e]">x</button>
        </div>
        <button type="button" aria-label="面板设置" className="mr-[9px] mb-[3px] ml-auto"><GearIcon /></button>
      </div>
      <div className="mt-[15px] flex h-7 items-start gap-px pl-1 text-[#444]">
        <button type="button" className="h-7 w-[129px] bg-[#608fce] font-bold text-white">监测器列表</button>
        {SUBTABS.map((t) => (
          <button key={t.t} type="button" className={`h-[25px] border border-b-0 border-[#b4b4b4] ${t.w}`}>{t.t}</button>
        ))}
      </div>
      <section className="mx-[3px] mb-[3px] flex flex-1 flex-col border border-[#a9b6cf] pt-px">
        <div className={`${SECTION_HEAD} h-[31px] bg-[length:100%_24px] bg-no-repeat`}>
          <h2 className="leading-[21px] font-bold text-[#4a6a96]">192.168.9.84(SNMPWindows)yuyantest</h2>
          <Toolbar />
        </div>
        <MonitorTable />
        <div className="flex h-[5px] items-center justify-center gap-[2px]">
          <i className="h-[2px] w-[2px] bg-[#888]" />
          <i className="h-[2px] w-[2px] bg-[#888]" />
          <i className="h-[2px] w-[2px] bg-[#888]" />
        </div>
        <div className={`${SECTION_HEAD} h-[25px] bg-[length:100%_22px] bg-no-repeat`}>
          <h2 className={`leading-[22px] text-[#3f5f92] ${GLOW}`}>监测器概要</h2>
          <div className="mt-[3px] mr-[8px] ml-auto flex items-center">
            <button type="button" className={`${BTN_ON} mr-1`}><PuzzleIcon />编辑</button>
            <button type="button" className={`${BTN} mr-[6px] gap-[3px]`}><CopyIcon />详细</button>
            <button type="button" className={`${BTN} mr-[7px]`}><RefreshBox />刷新</button>
            <button type="button" className={`${BTN} mr-[9px]`}><DeleteIcon />删除</button>
            <button type="button" className={BTN}><LogIcon />日志</button>
          </div>
        </div>
        <div className="mx-px flex">
          <div className="min-w-0 flex-1">
            <Controls />
            <Chart />
          </div>
          <Info />
        </div>
        <ValueTable />
      </section>
    </main>
  );
}

export default function App() {
  return (
    <div className="flex min-h-screen flex-col bg-white font-['DejaVu_Sans','Noto_Sans_CJK_SC',sans-serif] text-[12px] leading-4">
      <Defs />
      <Header />
      <div className="flex flex-1 pt-[10px] pr-[11px] pb-[5px] pl-[9px]">
        <Sidebar />
        <div className="flex w-[11px] flex-col items-center justify-center gap-[2px]">
          <i className="h-[2px] w-[2px] bg-[#aaa]" />
          <i className="h-[2px] w-[2px] bg-[#aaa]" />
          <i className="h-[2px] w-[2px] bg-[#aaa]" />
        </div>
        <MainPanel />
      </div>
    </div>
  );
}
